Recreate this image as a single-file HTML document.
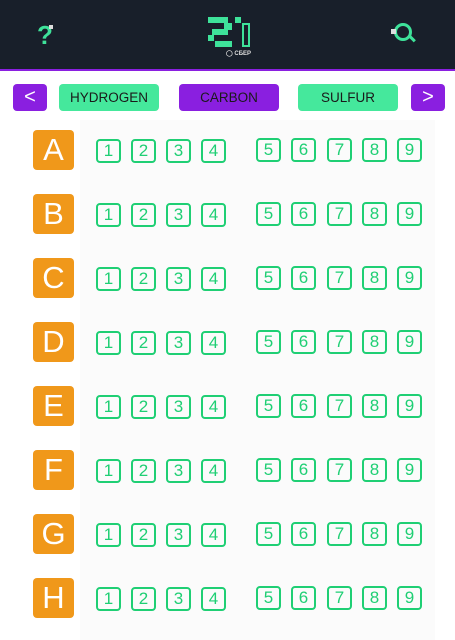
<!DOCTYPE html>
<html><head><meta charset="utf-8"><style>
*{margin:0;padding:0;box-sizing:border-box}
body{width:455px;height:640px;background:#fff;font-family:"Liberation Sans",sans-serif;position:relative;overflow:hidden}
.hdr{position:absolute;left:0;top:0;width:455px;height:71px;background:#181f2a;border-bottom:2px solid #8a1fe0}
.b{position:absolute;background:#3ee29a}
.btn{position:absolute;top:84px;height:27px;border-radius:4px;font-size:13.5px;color:#1a1a1a;display:flex;align-items:center;justify-content:center}
.g{background:#45e89c}.p{background:#8a1fe0}
.arr{color:#fff;font-size:20px}
.L{position:absolute;left:33px;width:41px;height:40px;background:#f0981a;border-radius:4px;color:#fff;font-size:31px;display:flex;align-items:center;justify-content:center}
.n{position:absolute;width:25px;height:24px;border:2px solid #1fcf74;border-radius:4px;color:#1fcf74;font-size:17px;display:flex;align-items:center;justify-content:center}
.bg{position:absolute;left:80px;top:120px;width:355px;height:520px;background:#fbfbfb}
</style></head><body>
<div class="hdr">
<div style="position:absolute;left:37px;top:20px;color:#3ee29a;font-size:26px;font-weight:bold">?</div>
<div style="position:absolute;left:49px;top:25px;width:4px;height:4px;background:#ddd"></div>
<div class="b" style="left:208px;top:17px;width:20px;height:6px"></div>
<div class="b" style="left:224px;top:23px;width:8px;height:7px"></div>
<div class="b" style="left:212px;top:29px;width:16px;height:6px"></div>
<div class="b" style="left:208px;top:35px;width:6px;height:6px"></div>
<div class="b" style="left:215px;top:41px;width:17px;height:6px"></div>
<div class="b" style="left:235px;top:17px;width:6px;height:6px"></div>
<div style="position:absolute;left:242px;top:23px;width:8px;height:24px;border:2px solid #3ee29a"></div>
<div style="position:absolute;left:226px;top:50px;color:#ddd;font-size:6px;font-weight:bold">◯ СБЕР</div>
<div style="position:absolute;left:394px;top:23px;width:18px;height:18px;border:3px solid #3ee29a;border-radius:50%"></div>
<div style="position:absolute;left:408px;top:37px;width:8px;height:3px;background:#3ee29a;transform:rotate(45deg)"></div>
<div style="position:absolute;left:391px;top:29px;width:5px;height:5px;background:#ddd"></div>
</div>
<div class="btn p arr" style="left:13px;width:34px">&lt;</div>
<div class="btn g" style="left:59px;width:100px">HYDROGEN</div>
<div class="btn p" style="left:179px;width:100px">CARBON</div>
<div class="btn g" style="left:298px;width:100px">SULFUR</div>
<div class="btn p arr" style="left:411px;width:34px">&gt;</div>
<div class="bg"></div>
<div id="rows"></div>
<script>
var L="ABCDEFGH",xs=[96,131,166,201,256,291,327,362,397],h="";
for(var i=0;i<8;i++){var c=150+i*64;h+='<div class="L" style="top:'+(c-20)+'px">'+L[i]+'</div>';
for(var j=0;j<9;j++){var y=c-12+(j<4?1:0);h+='<div class="n" style="left:'+xs[j]+'px;top:'+y+'px">'+(j+1)+'</div>';}}
document.getElementById("rows").innerHTML=h;
</script>
</body></html>
